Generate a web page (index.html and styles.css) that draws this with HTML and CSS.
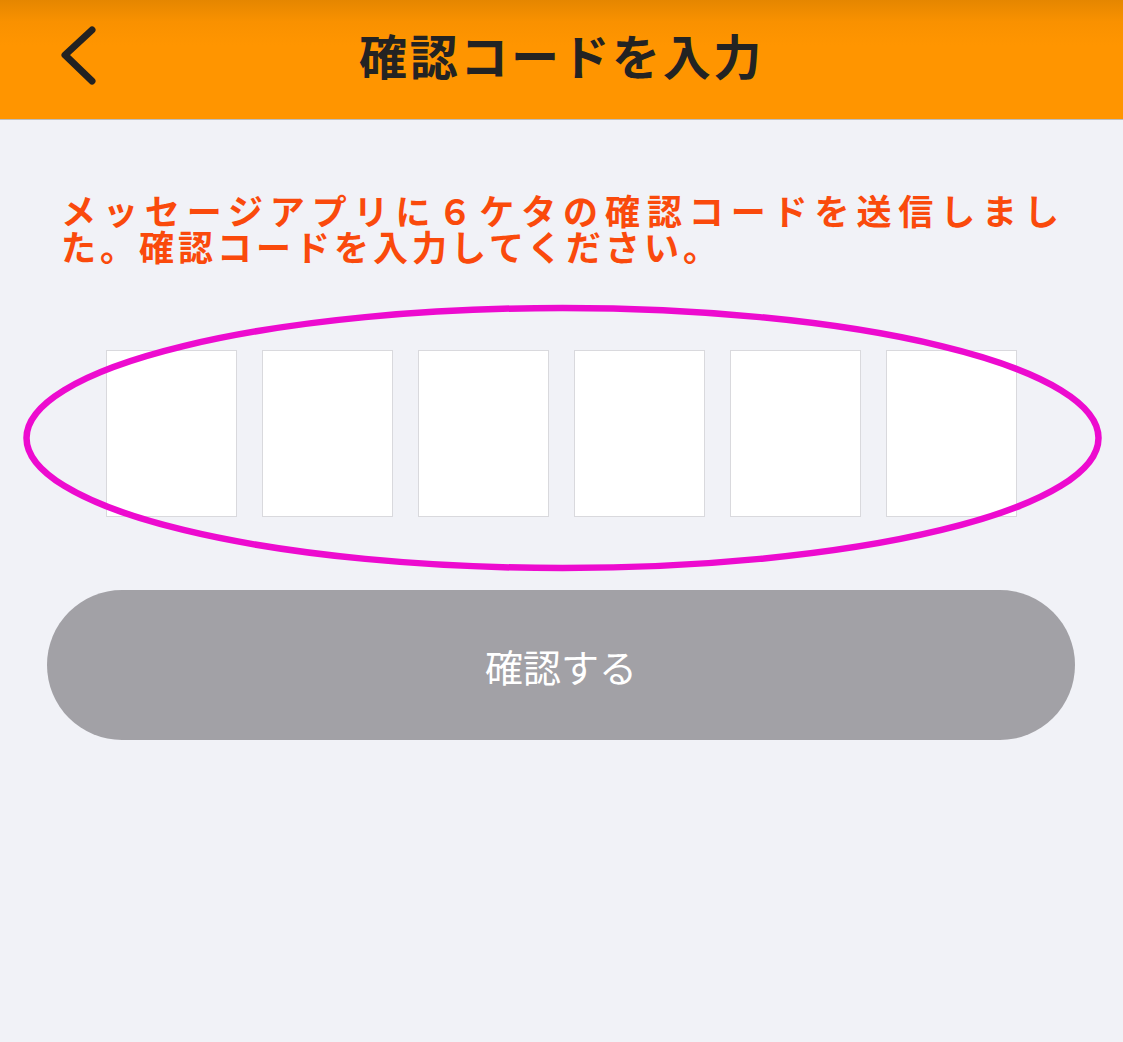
FILE: index.html
```html
<!DOCTYPE html>
<html lang="ja">
<head>
<meta charset="utf-8">
<title>確認コードを入力</title>
<link rel="stylesheet" href="styles.css">
</head>
<body>
<div class="page">
  <header class="navbar">
    <svg class="back" width="60" height="80" viewBox="40 15 60 80" aria-hidden="true">
      <path d="M92 30 L65 55 L92 81" fill="none" stroke="#222" stroke-width="7" stroke-linecap="round" stroke-linejoin="round"/>
    </svg>
    <h1 class="title">確認コードを入力</h1>
  </header>
  <main class="content">
    <p class="message">メッセージアプリに６ケタの確認コードを送信しました。確認コードを入力してください。</p>
    <div class="code-row">
      <div class="code-box"></div>
      <div class="code-box"></div>
      <div class="code-box"></div>
      <div class="code-box"></div>
      <div class="code-box"></div>
      <div class="code-box"></div>
    </div>
    <button class="confirm" type="button">確認する</button>
  </main>
  <svg class="annotation" width="1123" height="1042" viewBox="0 0 1123 1042" aria-hidden="true">
    <ellipse cx="562.5" cy="438" rx="536" ry="130" fill="none" stroke="#ED0BCF" stroke-width="6.5"/>
  </svg>
</div>
</body>
</html>
```

FILE: styles.css
```css
html, body {
  margin: 0;
  padding: 0;
}
body {
  background: #F1F2F7;
  font-family: "Noto Sans CJK JP", "Noto Sans", sans-serif;
  width: 1123px;
  height: 1042px;
  overflow: hidden;
}
.page {
  position: relative;
  width: 1123px;
  height: 1042px;
}
.navbar {
  position: relative;
  height: 119px;
  border-bottom: 1px solid #BDBDBD;
  background: linear-gradient(180deg, #E58600 0px, #F99100 22px, #FF9500 45px, #FF9500 100%);
  display: flex;
  justify-content: center;
  align-items: flex-start;
  box-sizing: content-box;
}
.back {
  position: absolute;
  left: 40px;
  top: 15px;
}
.title {
  margin: 0;
  padding-top: 22px;
  font-size: 48px;
  line-height: 64px;
  font-weight: 700;
  color: #232323;
  letter-spacing: 2.6px;
}
.content {
  display: flex;
  flex-direction: column;
  align-items: center;
}
.message {
  box-sizing: border-box;
  width: 100%;
  margin: 0;
  padding: 72px 60px 0 61px;
  font-size: 35px;
  line-height: 36px;
  font-weight: 700;
  color: #FA4A0C;
  letter-spacing: 4px;
  text-align: justify;
}
.code-row {
  margin-top: 86px;
  display: flex;
  gap: 25px;
}
.code-box {
  box-sizing: border-box;
  width: 131px;
  height: 167px;
  background: #FFFFFF;
  border: 1px solid #D9D9DD;
}
.confirm {
  margin-top: 73px;
  width: 1028px;
  height: 150px;
  margin-left: -1px;
  border: none;
  border-radius: 75px;
  background: #A2A1A6;
  color: #FFFFFF;
  font-family: "Noto Sans CJK JP", "Noto Sans", sans-serif;
  font-size: 38px;
  font-weight: 400;
  letter-spacing: 0;
  padding: 0;
}
.annotation {
  position: absolute;
  left: 0;
  top: 0;
  pointer-events: none;
}
```
